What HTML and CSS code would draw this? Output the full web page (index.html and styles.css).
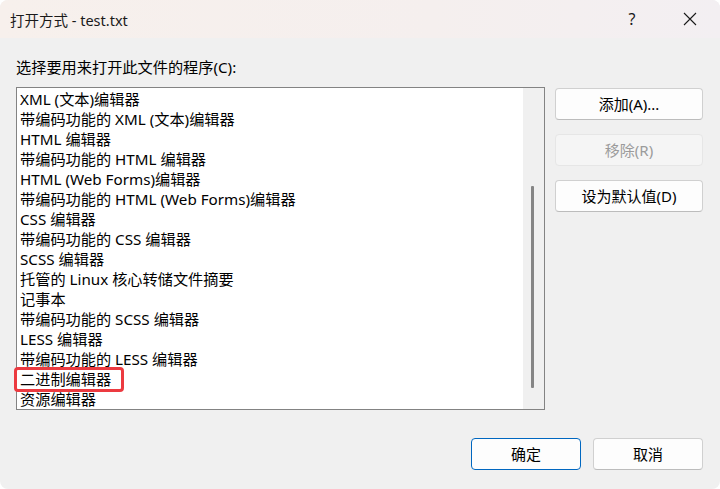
FILE: index.html
```html
<!DOCTYPE html>
<html lang="zh-CN">
<head>
<meta charset="utf-8">
<title>打开方式 - test.txt</title>
<link rel="stylesheet" href="styles.css">
</head>
<body>
<div class="window">
  <div class="titlebar">
    <span class="title">打开方式 - test.txt</span>
    <span class="tb-btn help">?</span>
    <span class="tb-btn close">
      <svg width="14" height="14" viewBox="0 0 14 14"><path d="M1 1 L13 13 M13 1 L1 13" stroke="#1a1a1a" stroke-width="1.1" fill="none"/></svg>
    </span>
  </div>
  <div class="content">
    <div class="label">选择要用来打开此文件的程序(C):</div>
    <div class="main">
      <div class="listbox">
        <ul class="items">
          <li>XML (文本)编辑器</li>
          <li>带编码功能的 XML (文本)编辑器</li>
          <li>HTML 编辑器</li>
          <li>带编码功能的 HTML 编辑器</li>
          <li>HTML (Web Forms)编辑器</li>
          <li>带编码功能的 HTML (Web Forms)编辑器</li>
          <li>CSS 编辑器</li>
          <li>带编码功能的 CSS 编辑器</li>
          <li>SCSS 编辑器</li>
          <li>托管的 Linux 核心转储文件摘要</li>
          <li>记事本</li>
          <li>带编码功能的 SCSS 编辑器</li>
          <li>LESS 编辑器</li>
          <li>带编码功能的 LESS 编辑器</li>
          <li>二进制编辑器</li>
          <li>资源编辑器</li>
        </ul>
        <div class="scrollbar"><div class="thumb"></div></div>
      </div>
      <div class="side">
        <button class="btn">添加(A)...</button>
        <button class="btn disabled">移除(R)</button>
        <button class="btn">设为默认值(D)</button>
      </div>
    </div>
    <div class="footer">
      <button class="btn primary">确定</button>
      <button class="btn">取消</button>
    </div>
  </div>
  <div class="mark"></div>
</div>
</body>
</html>
```
FILE: styles.css
```css
html, body {
  margin: 0;
  padding: 0;
  background: #ffffff;
}
body {
  font-family: "Noto Sans", "Noto Sans CJK SC", sans-serif;
  font-size: 15.2px;
  color: #000;
}
.window {
  position: relative;
  width: 720px;
  height: 489px;
  background: #f0f0f0;
  border-radius: 8px;
  overflow: hidden;
  box-sizing: border-box;
}
.titlebar {
  height: 38px;
  display: flex;
  align-items: center;
  background: linear-gradient(90deg, #f7f0ec 0%, #f5efee 60%, #f3eff2 100%);
  padding-left: 10px;
}
.title {
  flex: 1;
  font-size: 14.5px;
  color: #1a1a1a;
}
.tb-btn {
  display: flex;
  align-items: center;
  justify-content: center;
  height: 38px;
}
.help {
  width: 58px;
  font-size: 16px;
  color: #1a1a1a;
}
.close {
  width: 58px;
  margin-right: 1px;
}
.content {
  padding: 19px 17px 0 16px;
}
.label {
  height: 20px;
  line-height: 20px;
}
.main {
  display: flex;
  gap: 10px;
  margin-top: 10px;
}
.listbox {
  width: 529px;
  height: 323px;
  box-sizing: border-box;
  border: 1px solid #838383;
  background: #fff;
  display: flex;
}
.items {
  list-style: none;
  margin: 0;
  padding: 1px 0 0 3px;
  flex: 1;
}
.items li {
  height: 20px;
  line-height: 20px;
  white-space: nowrap;
}
.scrollbar {
  width: 21px;
  background: #f0f0f0;
  padding: 98px 0 0 8px;
  box-sizing: border-box;
}
.thumb {
  width: 3px;
  height: 202px;
  background: #858585;
  border-radius: 1px;
}
.side {
  width: 148px;
  display: flex;
  flex-direction: column;
  gap: 14px;
  padding-top: 1px;
}
.btn {
  font-family: "Noto Sans", "Noto Sans CJK SC", sans-serif;
  font-size: 15px;
  color: #000;
  height: 32px;
  background: #fdfdfd;
  border: 1px solid #d0d0d0;
  border-bottom-color: #bcbcbc;
  border-radius: 4px;
  padding: 0;
  line-height: 30px;
  box-sizing: border-box;
}
.btn.disabled {
  background: #f5f5f5;
  border-color: #e6e6e6;
  color: #9b9b9b;
}
.footer {
  display: flex;
  justify-content: flex-end;
  gap: 12px;
  margin-top: 28px;
}
.footer .btn {
  width: 110px;
}
.btn.primary {
  border: 1px solid #0067c0;
}
.mark {
  position: absolute;
  left: 14px;
  top: 367px;
  width: 110px;
  height: 25px;
  box-sizing: border-box;
  border: 3px solid #ec3a40;
  border-radius: 4px;
}
```
